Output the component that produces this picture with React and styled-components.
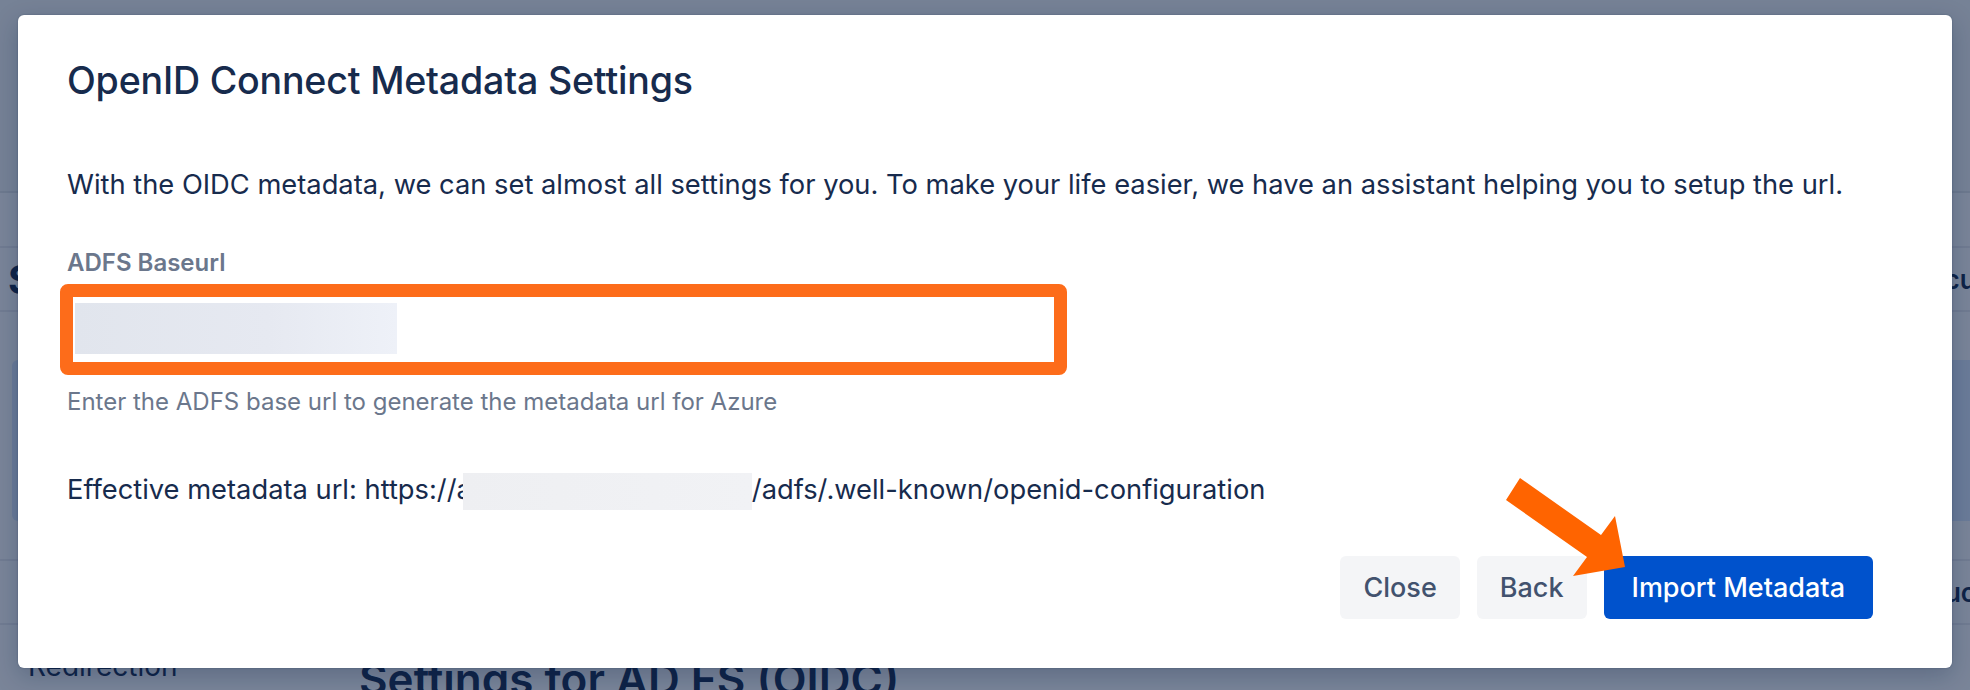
import React from "react";
import styled, { createGlobalStyle } from "styled-components";

const GlobalStyle = createGlobalStyle`
  body {
    margin: 0;
    background: #ffffff;
    font-family: "Inter", "Noto Sans", sans-serif;
    color: #172b4d;
  }
`;

const Page = styled.div`
  position: relative;
  width: 1970px;
  height: 690px;
  overflow: hidden;
  background: #ffffff;
`;

const TopBar = styled.header`
  height: 193px;
  background: #f7f8f9;
  border-bottom: 2px solid #e4e6ea;
  box-sizing: border-box;
`;

const Row = styled.div`
  display: grid;
  grid-template-columns: ${(p) => p.col || 1900}px 1fr;
  align-items: center;
  height: ${(p) => p.h}px;
  border-bottom: ${(p) => (p.line ? "2px solid #ebecf0" : "none")};
  box-sizing: border-box;
  white-space: nowrap;
`;

const SideTitle = styled.h2`
  margin: 0 0 0 8px;
  font-size: 40px;
  font-weight: 700;
  color: #172b4d;
`;

const EdgeText = styled.span`
  font-size: 26px;
  font-weight: 600;
  color: #172b4d;
`;

const InfoPanel = styled.div`
  height: 161px;
  margin-left: 12px;
  background: #deebff;
  border-radius: 6px 0 0 6px;
`;

const BottomRow = styled.div`
  display: grid;
  grid-template-columns: 359px 1fr;
  padding-top: 24px;
  white-space: nowrap;
`;

const NavItem = styled.span`
  align-self: start;
  padding-left: 28px;
  font-size: 28px;
  line-height: 34px;
  color: #172b4d;
`;

const PageHeading = styled.h1`
  margin: 0;
  font-size: 44px;
  font-weight: 600;
  color: #172b4d;
  line-height: 60px;
`;

const Blanket = styled.div`
  position: absolute;
  inset: 0;
  background: rgba(9, 30, 66, 0.54);
`;

const Modal = styled.section`
  position: absolute;
  left: 18px;
  top: 15px;
  width: 1934px;
  background: #ffffff;
  border-radius: 6px;
  box-shadow: 0 0 2px rgba(9, 30, 66, 0.3), 0 8px 24px rgba(9, 30, 66, 0.25);
  padding: 42px 0 49px 49px;
  box-sizing: border-box;
`;

const Title = styled.h1`
  margin: 0;
  font-size: 37.6px;
  line-height: 48px;
  font-weight: 500;
  letter-spacing: -0.2px;
  color: #172b4d;
`;

const Text = styled.p`
  margin: ${(p) => p.m || "0"};
  font-size: 27.3px;
  line-height: 40px;
  color: #172b4d;
  white-space: nowrap;
`;

const Label = styled.label`
  display: block;
  margin-top: 42px;
  font-size: 24px;
  line-height: 32px;
  font-weight: 600;
  color: #6b778c;
`;

const InputFrame = styled.div`
  margin: 5px 0 0 -7px;
  width: 1007px;
  height: 91px;
  border: 13px solid #fd6c1a;
  border-radius: 8px;
  padding: 6px 2px;
  box-sizing: border-box;
`;

const Redacted = styled.div`
  width: ${(p) => p.w}px;
  height: ${(p) => p.h}px;
  background: ${(p) => p.bg};
`;

const InlineRedacted = styled.span`
  display: inline-block;
  vertical-align: middle;
  margin-left: -9px;
  width: 289px;
  height: 37px;
  background: linear-gradient(90deg, #eeeff2, #f1f2f5);
`;

const Helper = styled.div`
  margin-top: 11px;
  font-size: 24px;
  line-height: 32px;
  color: #6b778c;
`;

const Footer = styled.footer`
  display: flex;
  justify-content: flex-end;
  gap: 17px;
  margin-top: 46px;
  padding-right: 79px;
`;

const Button = styled.button`
  height: 63px;
  padding: 0 ${(p) => p.px}px;
  border: none;
  border-radius: 6px;
  font-family: inherit;
  font-size: 27px;
  font-weight: 500;
  background: ${(p) => (p.primary ? "#0052cc" : "#f4f5f7")};
  color: ${(p) => (p.primary ? "#ffffff" : "#42526e")};
  cursor: pointer;
`;

const Arrow = styled.svg`
  position: absolute;
  left: 1480px;
  top: 455px;
  width: 140px;
  height: 120px;
  pointer-events: none;
`;

export default function App() {
  return (
    <>
      <GlobalStyle />
      <Page>
        <TopBar />
        <Row h={55} line />
        <Row h={64} line col={1910}>
          <SideTitle>Settings</SideTitle>
          <EdgeText>Documentation</EdgeText>
        </Row>
        <Row h={48} />
        <InfoPanel />
        <Row h={40} line />
        <Row h={64} line col={1888}>
          <span />
          <EdgeText>Instructions</EdgeText>
        </Row>
        <BottomRow>
          <NavItem>Redirection</NavItem>
          <PageHeading>Settings for AD FS (OIDC)</PageHeading>
        </BottomRow>
        <Blanket />
        <Modal>
          <Title>OpenID Connect Metadata Settings</Title>
          <Text m="60px 0 0">
            With the OIDC metadata, we can set almost all settings for you. To
            make your life easier, we have an assistant helping you to setup the
            url.
          </Text>
          <Label>ADFS Baseurl</Label>
          <InputFrame>
            <Redacted
              w={322}
              h={51}
              bg="linear-gradient(90deg, #e1e5ed, #e6e9f1 60%, #eef1f8)"
            />
          </InputFrame>
          <Helper>
            Enter the ADFS base url to generate the metadata url for Azure
          </Helper>
          <Text m="52px 0 0">
            Effective metadata url: https://a
            <InlineRedacted />
            /adfs/.well-known/openid-configuration
          </Text>
          <Footer>
            <Button px={23}>Close</Button>
            <Button px={23}>Back</Button>
            <Button px={28} primary>
              Import Metadata
            </Button>
          </Footer>
          <Arrow viewBox="0 0 140 120">
            <polygon
              points="22,8 103,65 117,46 127,97 75,106 89,87 8,30"
              fill="#ff6400"
            />
          </Arrow>
        </Modal>
      </Page>
    </>
  );
}
